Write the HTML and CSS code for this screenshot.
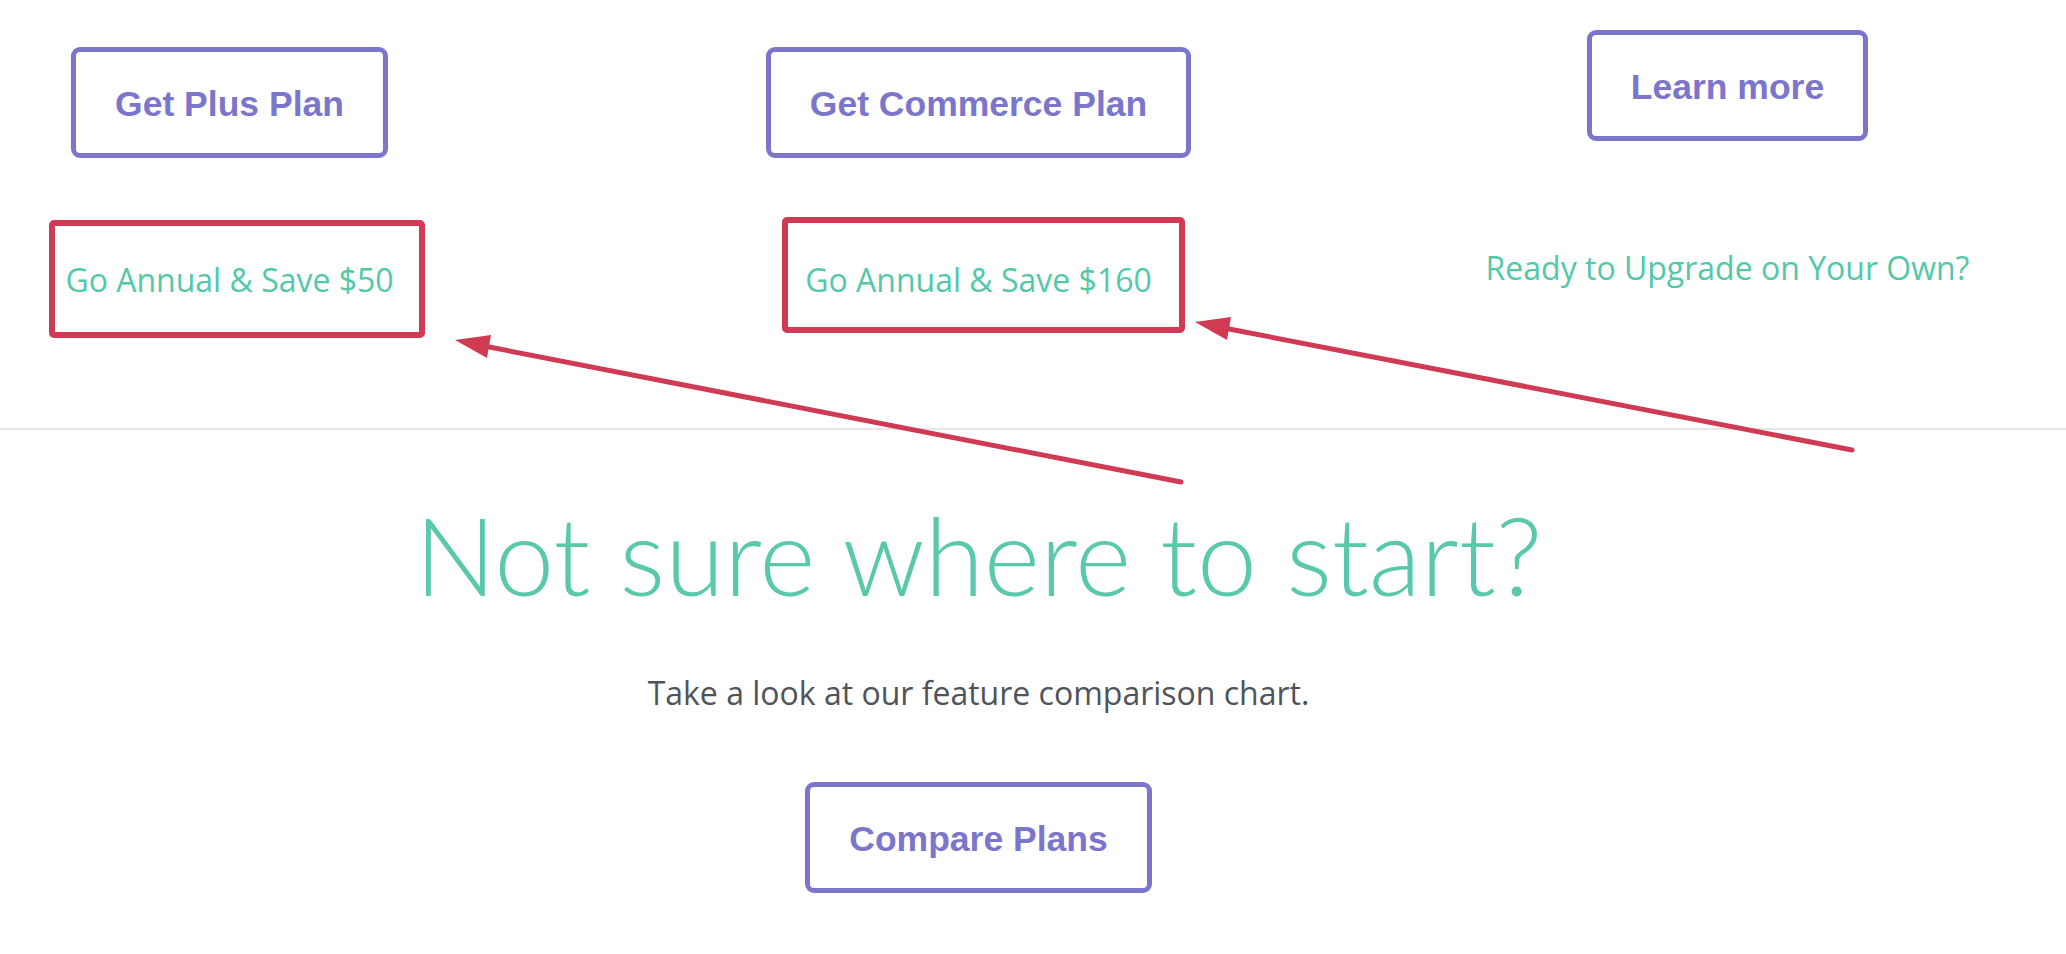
FILE: index.html
```html
<!DOCTYPE html>
<html lang="en">
<head>
<meta charset="utf-8">
<title>Plans</title>
<link rel="stylesheet" href="styles.css">
</head>
<body>
<div class="page">
  <section class="plans">
    <div class="plan">
      <a class="btn" href="#">Get Plus Plan</a>
      <a class="annual" href="#">Go Annual &amp; Save $50</a>
    </div>
    <div class="plan">
      <a class="btn" href="#">Get Commerce Plan</a>
      <a class="annual" href="#">Go Annual &amp; Save $160</a>
    </div>
    <div class="plan plan-upgrade">
      <a class="btn" href="#">Learn more</a>
      <a class="annual annual-upgrade" href="#">Ready to Upgrade on Your Own?</a>
    </div>
  </section>
  <section class="compare">
    <h2 class="compare-title">Not sure where to start?</h2>
    <p class="compare-sub">Take a look at our feature comparison chart.</p>
    <a class="btn" href="#">Compare Plans</a>
  </section>
</div>
<svg class="annotations" width="2066" height="954" viewBox="0 0 2066 954">
  <g fill="none" stroke="#d03a53" stroke-width="6">
    <rect x="52" y="223" width="370" height="112" rx="2"/>
    <rect x="785" y="220" width="397" height="110" rx="2"/>
  </g>
  <g stroke="#d03a53" stroke-width="5" stroke-linecap="round" fill="#d03a53">
    <line x1="1181" y1="482" x2="484" y2="346"/>
    <line x1="1852" y1="450" x2="1224" y2="328"/>
  </g>
  <g fill="#d03a53">
    <polygon points="455,340 491,335 487,358"/>
    <polygon points="1195,322 1231,317 1227,340"/>
  </g>
</svg>
</body>
</html>
```

FILE: styles.css
```css
html, body {
  margin: 0;
  padding: 0;
  background: #ffffff;
}

body {
  position: relative;
  width: 2066px;
  height: 954px;
  overflow: hidden;
  font-family: "Open Sans", "Liberation Sans", sans-serif;
}

.page {
  width: 2247px;
  margin-left: -145px;
}

.plans {
  display: grid;
  grid-template-columns: repeat(3, 1fr);
  height: 428px;
}

.plan {
  display: flex;
  flex-direction: column;
  align-items: center;
  padding-top: 47px;
}

.plan-upgrade {
  padding-top: 30px;
}

.btn {
  display: inline-block;
  border: 5px solid #7b76cc;
  border-radius: 9px;
  padding: 32px 39px 28px;
  font-family: "Liberation Sans", Arial, sans-serif;
  font-weight: bold;
  font-size: 35.5px;
  line-height: 41px;
  color: #7b76cc;
  text-decoration: none;
}

.annual {
  margin-top: 100px;
  font-family: "Open Sans", sans-serif;
  font-size: 32px;
  line-height: 43px;
  color: #52c8a9;
  text-decoration: none;
}

.annual-upgrade {
  margin-top: 105px;
}

.compare {
  border-top: 2px solid #e6e6e6;
  display: flex;
  flex-direction: column;
  align-items: center;
  text-align: center;
}

.compare-title {
  margin: 61px 0 0;
  font-family: Lato, sans-serif;
  font-weight: 300;
  font-size: 107.6px;
  line-height: 128px;
  color: #5ac8aa;
}

.compare-sub {
  margin: 54px 0 69px;
  font-family: "Open Sans", sans-serif;
  font-size: 32px;
  line-height: 40px;
  color: #4e545a;
}

.annotations {
  position: absolute;
  left: 0;
  top: 0;
  pointer-events: none;
}
```
